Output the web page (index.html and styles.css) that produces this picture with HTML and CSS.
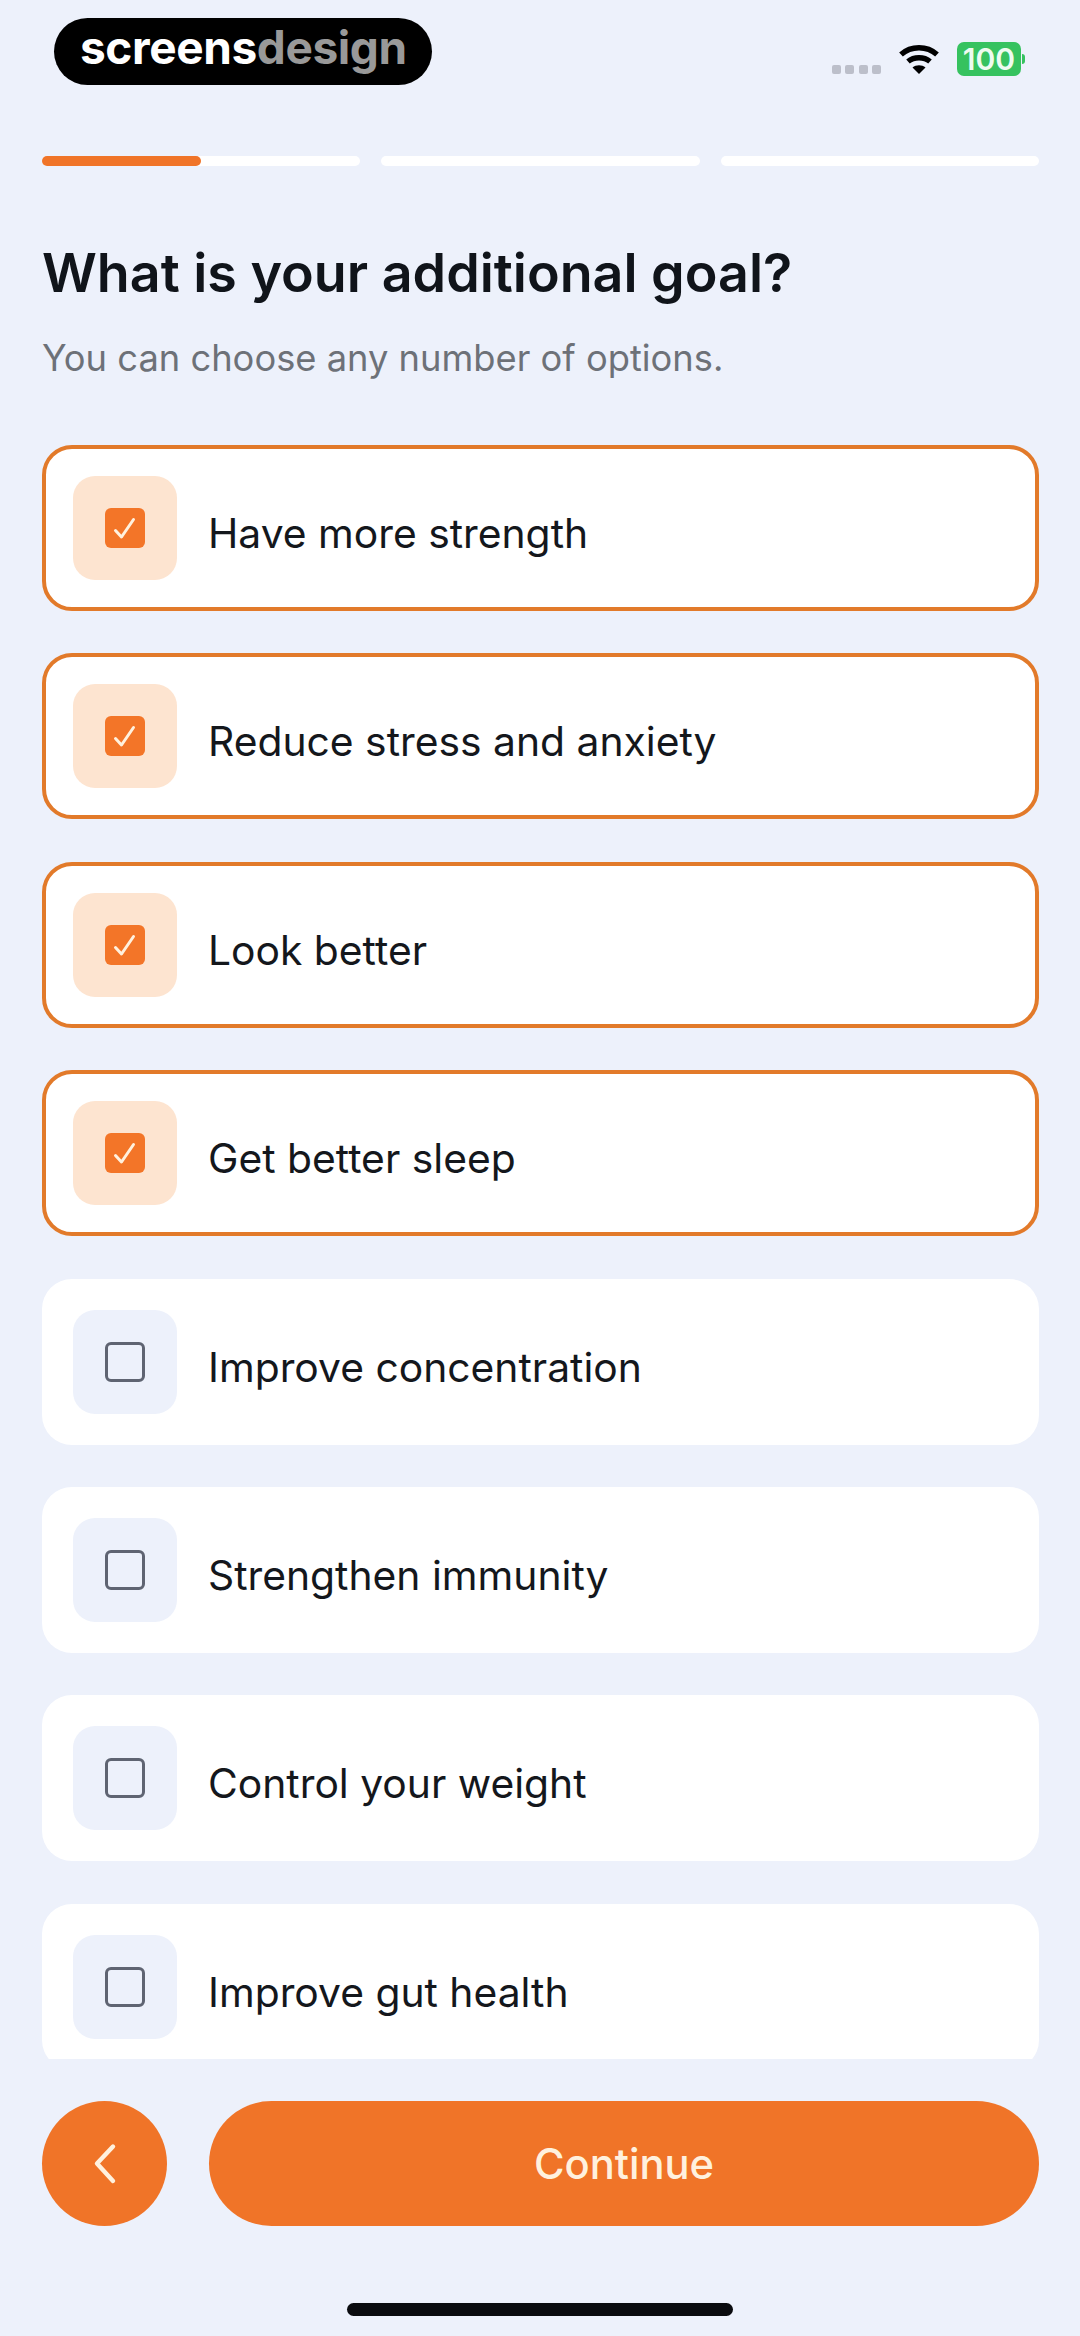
FILE: index.html
```html
<!DOCTYPE html>
<html lang="en">
<head>
    <meta charset="UTF-8">
    <meta name="viewport" content="width=device-width, initial-scale=1.0">
    <title>Additional goal</title>
    <link rel="stylesheet" href="styles.css">
</head>
<body>
    <div class="screen">
        <div class="status-bar">
            <div class="logo"><span>screens</span><span class="logo-dim">design</span></div>
            <div class="status-icons">
                <div class="signal"><i></i><i></i><i></i><i></i></div>
                <svg class="wifi" width="42" height="32" viewBox="0 0 42 32" fill="none" stroke="#000" stroke-width="5.5">
                    <path d="M3 11.5C13 2.5 29 2.5 39 11.5"/>
                    <path d="M10 18.5C16 13.5 26 13.5 32 18.5"/>
                    <path d="M21 31L14.5 24.5C18 21.5 24 21.5 27.5 24.5Z" fill="#000" stroke="none"/>
                </svg>
                <div class="battery"><span class="battery-level">100</span><i class="battery-cap"></i></div>
            </div>
        </div>

        <div class="progress">
            <div class="progress-seg"><div class="progress-fill"></div></div>
            <div class="progress-seg"></div>
            <div class="progress-seg"></div>
        </div>

        <h1>What is your additional goal?</h1>
        <p class="subtitle">You can choose any number of options.</p>

        <div class="options">
            <div class="option selected">
                <div class="option-icon">
                    <div class="box"><svg width="40" height="40" viewBox="0 0 40 40" fill="none" stroke="#fff1de" stroke-width="3" stroke-linecap="round" stroke-linejoin="round"><path d="M10.5 22.5L16.5 29L28.5 11.5"/></svg></div>
                </div>
                <span class="option-label">Have more strength</span>
            </div>
            <div class="option selected">
                <div class="option-icon">
                    <div class="box"><svg width="40" height="40" viewBox="0 0 40 40" fill="none" stroke="#fff1de" stroke-width="3" stroke-linecap="round" stroke-linejoin="round"><path d="M10.5 22.5L16.5 29L28.5 11.5"/></svg></div>
                </div>
                <span class="option-label">Reduce stress and anxiety</span>
            </div>
            <div class="option selected">
                <div class="option-icon">
                    <div class="box"><svg width="40" height="40" viewBox="0 0 40 40" fill="none" stroke="#fff1de" stroke-width="3" stroke-linecap="round" stroke-linejoin="round"><path d="M10.5 22.5L16.5 29L28.5 11.5"/></svg></div>
                </div>
                <span class="option-label">Look better</span>
            </div>
            <div class="option selected">
                <div class="option-icon">
                    <div class="box"><svg width="40" height="40" viewBox="0 0 40 40" fill="none" stroke="#fff1de" stroke-width="3" stroke-linecap="round" stroke-linejoin="round"><path d="M10.5 22.5L16.5 29L28.5 11.5"/></svg></div>
                </div>
                <span class="option-label">Get better sleep</span>
            </div>
            <div class="option">
                <div class="option-icon"><div class="box"></div></div>
                <span class="option-label">Improve concentration</span>
            </div>
            <div class="option">
                <div class="option-icon"><div class="box"></div></div>
                <span class="option-label">Strengthen immunity</span>
            </div>
            <div class="option">
                <div class="option-icon"><div class="box"></div></div>
                <span class="option-label">Control your weight</span>
            </div>
            <div class="option">
                <div class="option-icon"><div class="box"></div></div>
                <span class="option-label">Improve gut health</span>
            </div>
        </div>

        <div class="actions">
            <button class="back-btn">
                <svg width="28" height="42" viewBox="0 0 28 42" fill="none" stroke="#fff1de" stroke-width="4.4" stroke-linecap="round" stroke-linejoin="round"><path d="M22 3.5L6 20.5L22 38"/></svg>
            </button>
            <button class="continue-btn">Continue</button>
        </div>

        <div class="home-bar"></div>
    </div>
</body>
</html>
```

FILE: styles.css
```css
* {
    box-sizing: border-box;
}
body {
    margin: 0;
    background-color: #edf1fb;
    font-family: Inter, "Noto Sans", sans-serif;
    color: #14171c;
}
.screen {
    display: flex;
    flex-direction: column;
    height: 2336px;
    padding: 0 41px 0 42px;
    overflow: hidden;
}
.status-bar {
    display: flex;
    justify-content: space-between;
    height: 156px;
    padding: 18px 0 0 12px;
}
.logo {
    width: 378px;
    height: 67px;
    padding-left: 26px;
    border-radius: 34px;
    background-color: #000;
    color: #fff;
    font-size: 46px;
    font-weight: 700;
    line-height: 58px;
    letter-spacing: -0.4px;
}
.logo-dim {
    color: #999;
}
.status-icons {
    display: flex;
    align-items: flex-start;
    padding: 24px 0 0 0;
    margin-right: 14px;
}
.signal {
    display: flex;
    gap: 4.5px;
    margin-top: 23px;
}
.signal i {
    width: 9px;
    height: 9px;
    border-radius: 2px;
    background-color: #bcbfca;
}
.wifi {
    margin: 1px 0 0 17px;
}
.battery {
    display: flex;
    align-items: center;
    margin-left: 17px;
}
.battery-level {
    width: 64px;
    height: 34px;
    border-radius: 7px;
    background-color: #36c25f;
    color: #eefbf0;
    font-size: 30px;
    font-weight: 600;
    line-height: 34px;
    text-align: center;
}
.battery-cap {
    width: 3px;
    height: 10px;
    margin-left: 1px;
    border-radius: 0 3px 3px 0;
    background-color: #36c25f;
}
.progress {
    display: flex;
    gap: 21px;
}
.progress-seg {
    flex: 1;
    height: 10px;
    border-radius: 5px;
    background-color: #fff;
}
.progress-fill {
    width: 50%;
    height: 100%;
    border-radius: 5px;
    background-color: #f07428;
}
h1 {
    margin: 77px 0 0 0;
    font-size: 53.8px;
    font-weight: 600;
    line-height: 60px;
    color: #10141a;
}
.subtitle {
    margin: 33px 0 0 0;
    font-size: 36.3px;
    line-height: 44px;
    color: #6d7178;
}
.options {
    display: flex;
    flex-direction: column;
    flex: 1;
    min-height: 0;
    gap: 42.4px;
    margin-top: 65px;
    overflow: hidden;
}
.option {
    display: flex;
    flex: none;
    align-items: center;
    height: 166px;
    padding: 0 0 0 31px;
    border-radius: 30px;
    background-color: #fff;
    font-size: 40.8px;
}
.option.selected {
    padding-left: 27px;
    border: 4px solid #e27a2a;
}
.option-icon {
    display: flex;
    align-items: center;
    justify-content: center;
    width: 104px;
    height: 104px;
    margin-right: 31px;
    border-radius: 22px;
    background-color: #edf1fb;
}
.selected .option-icon {
    background-color: #fde4d0;
}
.option-label {
    padding-top: 10px;
}
.box {
    display: flex;
    align-items: center;
    justify-content: center;
    width: 40px;
    height: 40px;
    border: 3px solid #5f6472;
    border-radius: 6px;
}
.selected .box {
    border: none;
    background-color: #f37528;
}
.actions {
    display: flex;
    flex: none;
    gap: 42px;
    margin-top: 42px;
}
button {
    height: 125px;
    border: none;
    border-radius: 63px;
    background-color: #f07428;
    color: #fff1de;
    font-family: inherit;
}
.back-btn {
    display: flex;
    flex: none;
    align-items: center;
    justify-content: center;
    width: 125px;
    padding: 0;
}
.continue-btn {
    flex: 1;
    padding-top: 2px;
    font-size: 41.7px;
    font-weight: 500;
}
.home-bar {
    flex: none;
    width: 386px;
    height: 13px;
    margin: 77px 0 20px 305px;
    border-radius: 7px;
    background-color: #0a0b0f;
}
```
